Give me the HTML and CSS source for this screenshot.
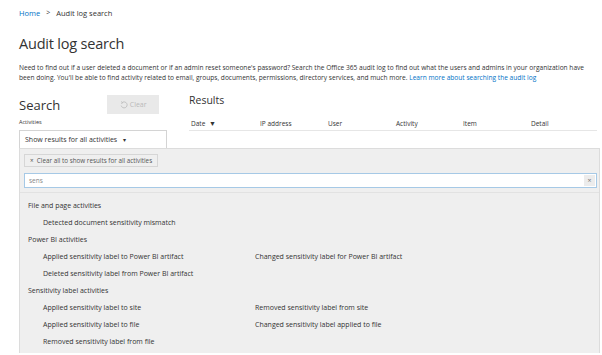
FILE: index.html
```html
<!DOCTYPE html>
<html lang="en">
<head>
  <meta charset="UTF-8">
  <meta name="viewport" content="width=device-width, initial-scale=1.0">
  <title>Audit log search</title>
  <link rel="stylesheet" href="styles.css">
</head>
<body>
  <!-- Breadcrumb -->
  <nav class="breadcrumb">
    <a href="#">Home</a>
    <span class="sep">&gt;</span>
    <span>Audit log search</span>
  </nav>

  <h1 class="page-title">Audit log search</h1>

  <p class="intro">
    Need to find out if a user deleted a document or if an admin reset someone's password? Search the Office 365 audit log to find out what the users and admins in your organization have<br>
    been doing. You'll be able to find activity related to email, groups, documents, permissions, directory services, and much more.
    <a href="#">Learn more about searching the audit log</a>
  </p>

  <!-- Search + Results -->
  <section class="search-area">
    <div class="search-pane">
      <div class="search-head">
        <h2>Search</h2>
        <button class="clear-btn" disabled>
          <svg width="8" height="8" viewBox="0 0 8 8"><path d="M2.2 1.6 A3 3 0 1 1 1.2 4.6" fill="none" stroke="#b9b9b9" stroke-width="0.8"/><path d="M1 0.6 L2.6 1.6 L1.4 3" fill="none" stroke="#b9b9b9" stroke-width="0.8"/></svg>
          Clear
        </button>
      </div>
      <div class="field-label">Activities</div>

      <div class="activity-picker">
        <div class="picker-box">Show results for all activities <span class="caret">&#9662;</span></div>

        <div class="picker-panel">
          <div class="panel-top">
            <span class="chip">&times;&nbsp; Clear all to show results for all activities</span>
            <div class="filter-input">
              <span>sens</span>
              <span class="filter-clear">&times;</span>
            </div>
          </div>

          <div class="group">
            <div class="group-title">File and page activities</div>
            <div class="group-items">
              <div>Detected document sensitivity mismatch</div>
            </div>
          </div>

          <div class="group">
            <div class="group-title">Power BI activities</div>
            <div class="group-items">
              <div>Applied sensitivity label to Power BI artifact</div>
              <div>Changed sensitivity label for Power BI artifact</div>
              <div>Deleted sensitivity label from Power BI artifact</div>
            </div>
          </div>

          <div class="group">
            <div class="group-title">Sensitivity label activities</div>
            <div class="group-items">
              <div>Applied sensitivity label to site</div>
              <div>Removed sensitivity label from site</div>
              <div>Applied sensitivity label to file</div>
              <div>Changed sensitivity label applied to file</div>
              <div>Removed sensitivity label from file</div>
            </div>
          </div>
        </div>
      </div>
    </div>

    <div class="results-pane">
      <h2>Results</h2>
      <div class="results-header">
        <span>Date <span class="sort">&#9660;</span></span>
        <span>IP address</span>
        <span>User</span>
        <span>Activity</span>
        <span>Item</span>
        <span>Detail</span>
      </div>
    </div>
  </section>
</body>
</html>
```

FILE: styles.css
```css
/* General Reset */
* {
  margin: 0;
  padding: 0;
  box-sizing: border-box;
}

html,
body {
  height: 100%;
}

body {
  font-family: "Open Sans", "Noto Sans", sans-serif;
  color: #333;
  background: #fff;
  padding-left: 19px;
}

a {
  color: #0072c6;
  text-decoration: none;
}

/* Breadcrumb */
.breadcrumb {
  font-size: 7.5px;
  line-height: 12px;
  padding-top: 7px;
  display: flex;
  gap: 6px;
}

.breadcrumb .sep {
  font-size: 7px;
}

/* Title + intro */
.page-title {
  font-size: 14.5px;
  letter-spacing: -0.2px;
  font-weight: 400;
  line-height: 20px;
  margin-top: 15px;
}

.intro {
  font-size: 6.6px;
  line-height: 10px;
  margin-top: 9px;
  white-space: nowrap;
}

/* Search area */
.search-area {
  display: flex;
  margin-top: 12px;
}

.search-pane {
  width: 170px;
  flex-shrink: 0;
}

.search-head {
  display: flex;
  align-items: flex-start;
  gap: 47px;
}

.search-head h2 {
  font-size: 13px;
  font-weight: 400;
  line-height: 18px;
  margin-top: 1px;
}

.clear-btn {
  width: 52px;
  height: 19px;
  border: none;
  background: #e9e9e9;
  color: #b9b9b9;
  font-family: inherit;
  font-size: 7px;
  display: flex;
  align-items: center;
  justify-content: center;
  gap: 2px;
}

.field-label {
  font-size: 5.5px;
  line-height: 8px;
  margin-top: 4px;
}

/* Activity picker */
.activity-picker {
  position: relative;
  margin-top: 4px;
}

.picker-box {
  width: 148px;
  height: 18px;
  border: 1px solid #d4d4d4;
  border-bottom: none;
  font-size: 7px;
  line-height: 17px;
  padding-left: 5px;
}

.picker-box .caret {
  font-size: 6px;
  margin-left: 4px;
}

.picker-panel {
  position: absolute;
  top: 100%;
  left: 0;
  width: 581px;
  height: 205px;
  overflow: hidden;
  background: #efefef;
  border: 1px solid #dcdcdc;
  border-bottom: none;
  z-index: 2;
}

.panel-top {
  display: flex;
  flex-direction: column;
  align-items: flex-start;
  gap: 6px;
  padding: 5px 2px 4px 4px;
  border-bottom: 1px solid #e2e2e2;
}

.chip {
  border: 1px solid #d6d6d6;
  font-size: 6.3px;
  line-height: 11px;
  padding: 0 5px;
  color: #555;
}

.filter-input {
  align-self: stretch;
  height: 15px;
  background: #fff;
  border: 1px solid #a6c9e6;
  font-size: 6.5px;
  color: #888;
  display: flex;
  align-items: center;
  justify-content: space-between;
  padding: 0 1px 0 4px;
}

.filter-clear {
  width: 11px;
  height: 11px;
  background: #ececec;
  font-size: 7px;
  line-height: 11px;
  text-align: center;
  color: #777;
}

.group {
  font-size: 7px;
  line-height: 17px;
}

.panel-top + .group {
  margin-top: 4px;
}

.group-title {
  padding-left: 8px;
}

.group-items {
  display: grid;
  grid-template-columns: 212px 1fr;
  padding-left: 23px;
}

/* Results */
.results-pane {
  flex: 1;
  min-width: 0;
  padding-right: 5px;
}

.results-pane h2 {
  font-size: 10.5px;
  font-weight: 400;
  line-height: 14px;
  margin-top: -2px;
}

.results-header {
  display: grid;
  grid-template-columns: 69px 68px 68px 67px 68px 1fr;
  font-size: 6.5px;
  line-height: 10px;
  padding: 12px 0 1px 2px;
  border-bottom: 1px solid #e6e6e6;
}

.results-header .sort {
  font-size: 7px;
  margin-left: 2px;
}
```
